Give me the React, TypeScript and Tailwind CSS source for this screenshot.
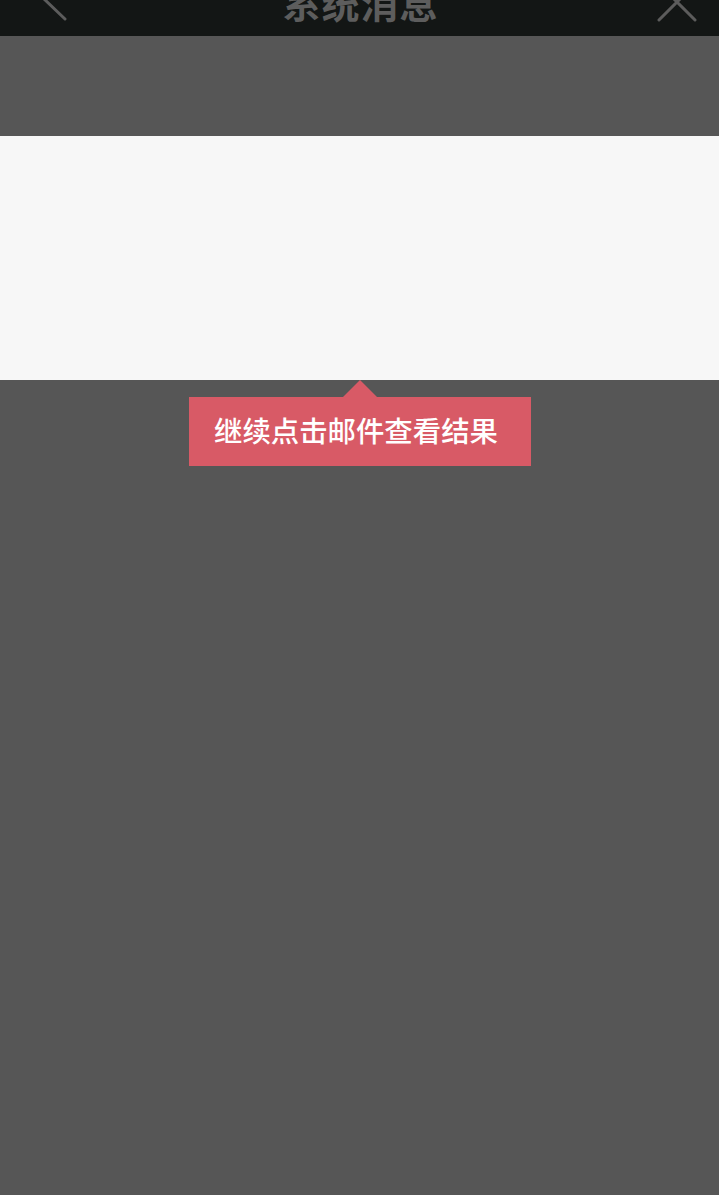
import React from "react";

const cjk = { fontFamily: '"Noto Sans CJK SC", "Noto Sans", sans-serif' };

function BackIcon() {
  return (
    <svg width="40" height="36" viewBox="0 0 40 36" className="shrink-0">
      <path d="M27 -21 L6 -1 L27 19" fill="none" stroke="#5c5c5c" strokeWidth="3" strokeLinecap="round" strokeLinejoin="round" />
    </svg>
  );
}

function CloseIcon() {
  return (
    <svg width="44" height="36" viewBox="0 0 44 36" className="shrink-0">
      <path d="M4 20 L40 -16 M4 -16 L40 20" fill="none" stroke="#5c5c5c" strokeWidth="3" strokeLinecap="round" />
    </svg>
  );
}

export default function App() {
  return (
    <div className="min-h-[1195px] w-full bg-[#565656] flex flex-col" style={cjk}>
      <div className="h-[36px] bg-[#131615] flex items-start justify-between overflow-hidden pl-[38px] pr-[20px]">
        <BackIcon />
        <div className="-mt-[22px] mr-[12px] text-[38px] leading-[48px] font-bold text-[#5d5d5d] tracking-[1px]">
          系统消息
        </div>
        <CloseIcon />
      </div>

      <div className="h-[100px]" />

      <div className="h-[244px] bg-[#f7f7f7]" />

      <div className="ml-[189px] w-[342px] flex flex-col">
        <div className="ml-[154px] h-0 w-0 border-x-[17px] border-b-[17px] border-x-transparent border-b-[#d85a66]" />
        <div className="h-[69px] bg-[#d85a66] flex items-center pl-[25px] pb-[3px]">
          <span className="text-[28.4px] leading-none font-medium text-white">
            继续点击邮件查看结果
          </span>
        </div>
      </div>
    </div>
  );
}
